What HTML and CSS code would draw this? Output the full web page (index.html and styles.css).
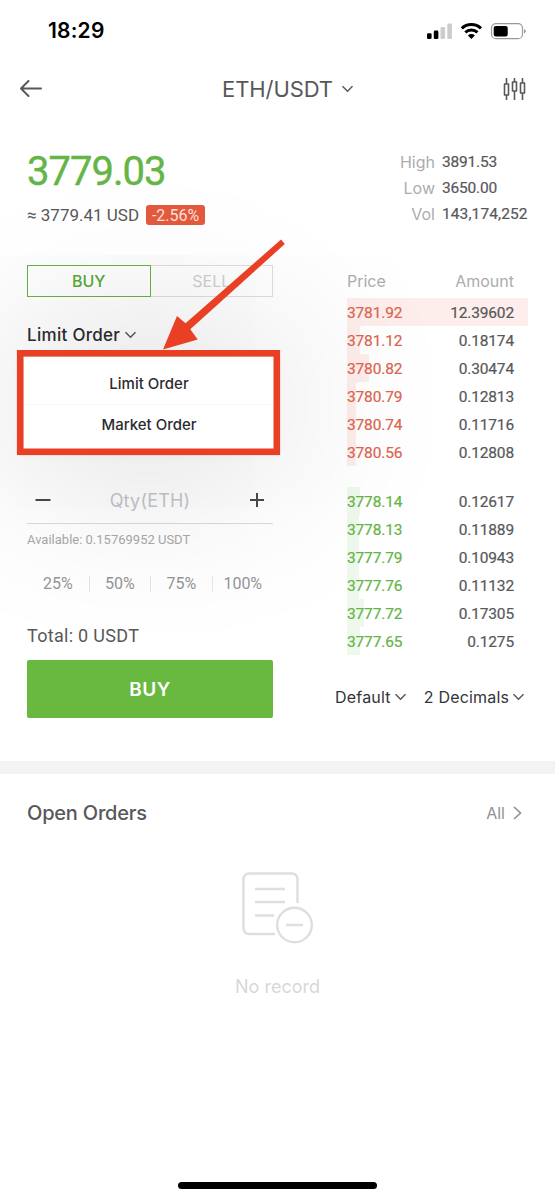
FILE: index.html
```
<!DOCTYPE html>
<html lang="en">
<head>
<meta charset="utf-8">
<title>ETH/USDT</title>
<link rel="stylesheet" href="styles.css">
</head>
<body>
<div class="screen">
  <header class="status">
    <span class="clock">18:29</span>
    <svg class="status-icons" width="100" height="20" viewBox="0 0 100 20">
      <rect x="1" y="12.3" width="4.6" height="5.7" rx="1.3"/>
      <rect x="7.8" y="9.6" width="4.6" height="8.4" rx="1.3"/>
      <rect x="14.5" y="6" width="4.6" height="12" rx="1.3" fill="#ccc"/>
      <rect x="21.3" y="2.5" width="4.6" height="15.5" rx="1.3" fill="#ccc"/>
      <path d="M35.8 7.4a14 14 0 0 1 19.2 0M39.3 11.3a9 9 0 0 1 12.2 0" fill="none" stroke="#000" stroke-width="3"/>
      <path d="M41.9 14.4a5 5 0 0 1 7 0L45.4 18z"/>
      <rect x="65.5" y="2.7" width="31" height="15" rx="4.5" fill="none" stroke="#999" stroke-width="1.2"/>
      <rect x="67.7" y="4.9" width="14" height="10.6" rx="2"/>
      <path d="M98 8v4.5q1.8-.8 1.8-2.25T98 8" fill="#999"/>
    </svg>
  </header>

  <nav class="nav">
    <svg class="back" width="24" height="20" viewBox="0 0 24 20"><path d="M22 9.500H2.500M9.500 2L2 9.500 9.500 17"/></svg>
    <div class="pair"><span class="pair-name">ETH/USDT</span><svg class="chev" width="13" height="8" viewBox="0 0 13 8"><path d="M1.500 1.200l5 5 5-5"/></svg></div>
    <svg class="candles" width="24" height="22" viewBox="0 0 24 22"><path d="M3.500 .5v5.500M3.500 17v4.500M1.500 6h4v11h-4zM11.500 .5v3.500M11.500 13v8.500M9.500 4h4v9h-4zM19.500 .5v4.500M19.500 15v6.500M17.500 5h4v10h-4z"/></svg>
  </nav>

  <section class="ticker">
    <div>
      <div class="price">3779.03</div>
      <div class="fiat"><span>≈ 3779.41 USD</span><span class="change">-2.56%</span></div>
    </div>
    <dl class="stats">
      <dt>High</dt><dd>3891.53</dd>
      <dt>Low</dt><dd>3650.00</dd>
      <dt>Vol</dt><dd class="vol">143,174,252</dd>
    </dl>
  </section>

  <section class="trade">
    <div class="form">
      <div class="tabs"><span class="tab on">BUY</span><span class="tab off">SELL</span></div>
      <div class="type">
        <span>Limit Order</span><svg class="chev" width="13" height="8" viewBox="0 0 13 8"><path d="M1.500 1.200l5 5 5-5"/></svg>
        <div class="menu"><span>Limit Order</span><span>Market Order</span></div>
      </div>
      <div class="qty">
        <svg width="16" height="16" viewBox="0 0 16 16"><path d="M.5 8h15"/></svg>
        <span>Qty(ETH)</span>
        <svg width="16" height="16" viewBox="0 0 16 16"><path d="M1 8h14M8 1v14"/></svg>
      </div>
      <div class="available">Available: 0.15769952 USDT</div>
      <div class="percents"><span>25%</span><span>50%</span><span>75%</span><span>100%</span></div>
      <div class="total">Total: 0 USDT</div>
      <div class="buy">BUY</div>
    </div>

    <div class="book">
      <div class="book-head"><span>Price</span><span>Amount</span></div>
      <div class="side asks">
        <div class="row"><i style="width:181px"></i><b>3781.92</b><span>12.39602</span></div>
        <div class="row"><i style="width:13px"></i><b>3781.12</b><span>0.18174</span></div>
        <div class="row"><i style="width:22px"></i><b>3780.82</b><span>0.30474</span></div>
        <div class="row"><i style="width:9px"></i><b>3780.79</b><span>0.12813</span></div>
        <div class="row"><i style="width:9px"></i><b>3780.74</b><span>0.11716</span></div>
        <div class="row"><i style="width:9px"></i><b>3780.56</b><span>0.12808</span></div>
      </div>
      <div class="side bids">
        <div class="row"><i style="width:13px"></i><b>3778.14</b><span>0.12617</span></div>
        <div class="row"><i style="width:12px"></i><b>3778.13</b><span>0.11889</span></div>
        <div class="row"><i style="width:12px"></i><b>3777.79</b><span>0.10943</span></div>
        <div class="row"><i style="width:12px"></i><b>3777.76</b><span>0.11132</span></div>
        <div class="row"><i style="width:17px"></i><b>3777.72</b><span>0.17305</span></div>
        <div class="row"><i style="width:13px"></i><b>3777.65</b><span>0.1275</span></div>
      </div>
      <div class="filters">
        <span class="f1">Default</span><svg class="chev" width="13" height="8" viewBox="0 0 13 8"><path d="M1.500 1.200l5 5 5-5"/></svg>
        <span class="f2">2 Decimals</span><svg class="chev" width="13" height="8" viewBox="0 0 13 8"><path d="M1.500 1.200l5 5 5-5"/></svg>
      </div>
    </div>
  </section>

  <section class="orders">
    <div class="orders-head"><h2>Open Orders</h2><span class="all">All</span><svg width="9" height="14" viewBox="0 0 9 14"><path d="M1 1l6.500 6L1 13"/></svg></div>
    <svg class="empty-icon" width="74" height="74" viewBox="0 0 74 74"><path d="M36 64H10.500q-6 0-6-6V9.500q0-6 6-6h42q6 0 6 6V33M16 19h30M16 32h30M16 45.500h19M47 55h17"/><circle cx="55.500" cy="55" r="17.300"/></svg>
    <p class="empty">No record</p>
  </section>

  <div class="home"></div>

  <svg class="note" width="280" height="230" viewBox="0 0 280 230">
    <rect x="10.200" y="123.300" width="256.600" height="98.500" fill="none" stroke="#e93f25" stroke-width="6.600"/>
    <path d="M271 9.600l3.800 4.400L180.300 99.200l7.400 10.400L153 119.500l14-33.500 8.500 7.200z" fill="#e93f25"/>
  </svg>
</div>
</body>
</html>
```
FILE: styles.css
```
* { box-sizing: border-box; }
body { margin: 0; background: #fff; font-family: Inter, sans-serif; color: #58585a; }
.screen { position: relative; width: 555px; height: 1200px; overflow: hidden; display: flex; flex-direction: column; }
svg { flex: none; }
span, dt, dd, b { white-space: nowrap; }
.chev { fill: none; stroke: #58585a; stroke-width: 1.5; }

.status { height: 60px; padding: 0 29px 0 48px; display: flex; justify-content: space-between; align-items: center; }
.clock { font-size: 21px; font-weight: 600; color: #000; letter-spacing: .2px; }
.status-icons { margin-top: 1px; }

.nav { height: 57px; padding: 0 28px 0 19px; display: flex; justify-content: space-between; align-items: center; }
.back, .candles { fill: none; stroke: #58585a; stroke-width: 2; stroke-linecap: round; stroke-linejoin: round; }
.candles { stroke-width: 1.6; }
.pair { display: flex; align-items: center; gap: 8px; margin-left: 30px; }
.pair-name { font-size: 22px; letter-spacing: -.1px; }

.ticker { height: 148px; padding: 31px 27px 0; display: flex; justify-content: space-between; font-family: Roboto, sans-serif; }
.price { height: 48px; line-height: 48px; font-size: 40px; -webkit-text-stroke: .4px #65b446; letter-spacing: -1px; color: #65b446; }
.fiat { height: 20px; margin-top: 9px; display: flex; gap: 7px; line-height: 21px; font-size: 17px; }
.change { width: 59px; border-radius: 3px; background: #e35a3e; color: #fce0d9; text-align: center; font-size: 16px; }
.stats { margin: 1px 0 0; display: grid; grid-template-columns: 40px 86px; column-gap: 7px; grid-auto-rows: 26px; line-height: 26px; }
.stats dt { text-align: right; color: #acacae; font-family: Inter, sans-serif; font-size: 16px; }
.stats dd { margin: 0; font-size: 15.5px; line-height: 27px; -webkit-text-stroke: .2px; letter-spacing: -.2px; }
.stats .vol { letter-spacing: .1px; }

.trade { height: 496px; padding: 0 27px; display: flex; justify-content: space-between; }
.form { width: 246px; }
.tabs { height: 32px; display: flex; font-size: 16px; line-height: 32px; text-align: center; }
.tab { flex: 1; }
.on { line-height: 30px; border: 1.5px solid #65b446; color: #57aa38; font-weight: 500; }
.off { line-height: 30px; border: 1px solid #dedee0; border-left: 0; color: #cfcfd1; }
.type { position: relative; height: 74px; padding-top: 1px; display: flex; align-items: center; gap: 4px; font-size: 17px; font-weight: 500; letter-spacing: .3px; color: #2c2c2f; }
.menu { position: absolute; z-index: 1; left: -3px; top: 60px; width: 250px; height: 92px; padding: 7px 0 5px; background: #fff; display: flex; flex-direction: column; text-align: center; font-size: 15px; line-height: 40px; letter-spacing: 0; box-shadow: 0 0 190px rgba(0,0,0,.24), 0 3px 12px rgba(0,0,0,.05); }
.menu span + span { border-top: 1px solid #f6f6f7; }
.qty { height: 47px; margin-top: 106px; padding: 0 8px; border-bottom: 1px solid #dcdcde; display: flex; justify-content: space-between; align-items: center; font-size: 18px; letter-spacing: .2px; color: #c5c6cc; }
.qty svg { fill: none; stroke: #49494b; stroke-width: 2; }
.available { height: 32px; line-height: 32px; font-family: Roboto, sans-serif; font-size: 13px; color: #a9a9ab; }
.percents { height: 55px; display: grid; grid-template-columns: repeat(4, 1fr); align-items: center; font-family: Roboto, sans-serif; font-size: 16px; line-height: 16px; text-align: center; color: #949597; }
.percents span + span { border-left: 1px solid #e6e6e8; }
.total { height: 49px; line-height: 49px; font-family: Roboto, sans-serif; font-size: 18px; letter-spacing: .3px; }
.buy { height: 58px; border-radius: 2px; background: #69b940; color: #fff; text-align: center; font-size: 19px; line-height: 60px; font-weight: 600; letter-spacing: .5px; }

.book { width: 181px; font-family: Roboto, sans-serif; font-size: 16px; }
.book-head { height: 33px; padding-right: 14px; display: flex; justify-content: space-between; line-height: 33px; font-family: Inter, sans-serif; color: #acacae; }
.row { position: relative; height: 28px; padding-right: 14px; display: flex; justify-content: space-between; font-size: 15.5px; line-height: 30px; letter-spacing: -.15px; }
.row i { position: absolute; left: 0; top: 0; height: 28px; }
.row b, .row span { position: relative; font-weight: 400; -webkit-text-stroke: .2px; }
.asks i { background: #fdeeec; }
.asks b { color: #dd6650; }
.bids { margin-top: 21px; }
.bids i { background: #eff8ec; }
.bids b { color: #65b446; }
.filters { height: 40px; margin: 22px 0 0 -12px; display: flex; align-items: center; gap: 3px; font-family: Inter, sans-serif; font-size: 16px; letter-spacing: .2px; color: #343437; }
.f2 { margin-left: 14px; }

.orders { border-top: 13px solid #f1f3f5; padding: 0 33px 0 27px; display: flex; flex-direction: column; }
.orders-head { height: 78px; display: flex; align-items: center; }
.orders-head h2 { margin: 0 auto 0 0; font-size: 20px; font-weight: 500; letter-spacing: -.2px; }
.orders-head svg { margin-left: 8px; fill: none; stroke: #929294; stroke-width: 1.7; }
.all { font-size: 16px; color: #929294; }
.empty-icon { margin: 18px 0 0 212px; fill: none; stroke: #dededf; stroke-width: 2.4; }
.empty { margin: 31px 0 0 6px; text-align: center; font-size: 18px; line-height: 24px; color: #d8d8d9; }

.home { width: 199px; height: 7px; margin: auto auto 11px; border-radius: 4px; background: #000; }
.note { position: absolute; left: 10px; top: 230px; z-index: 2; }
```
